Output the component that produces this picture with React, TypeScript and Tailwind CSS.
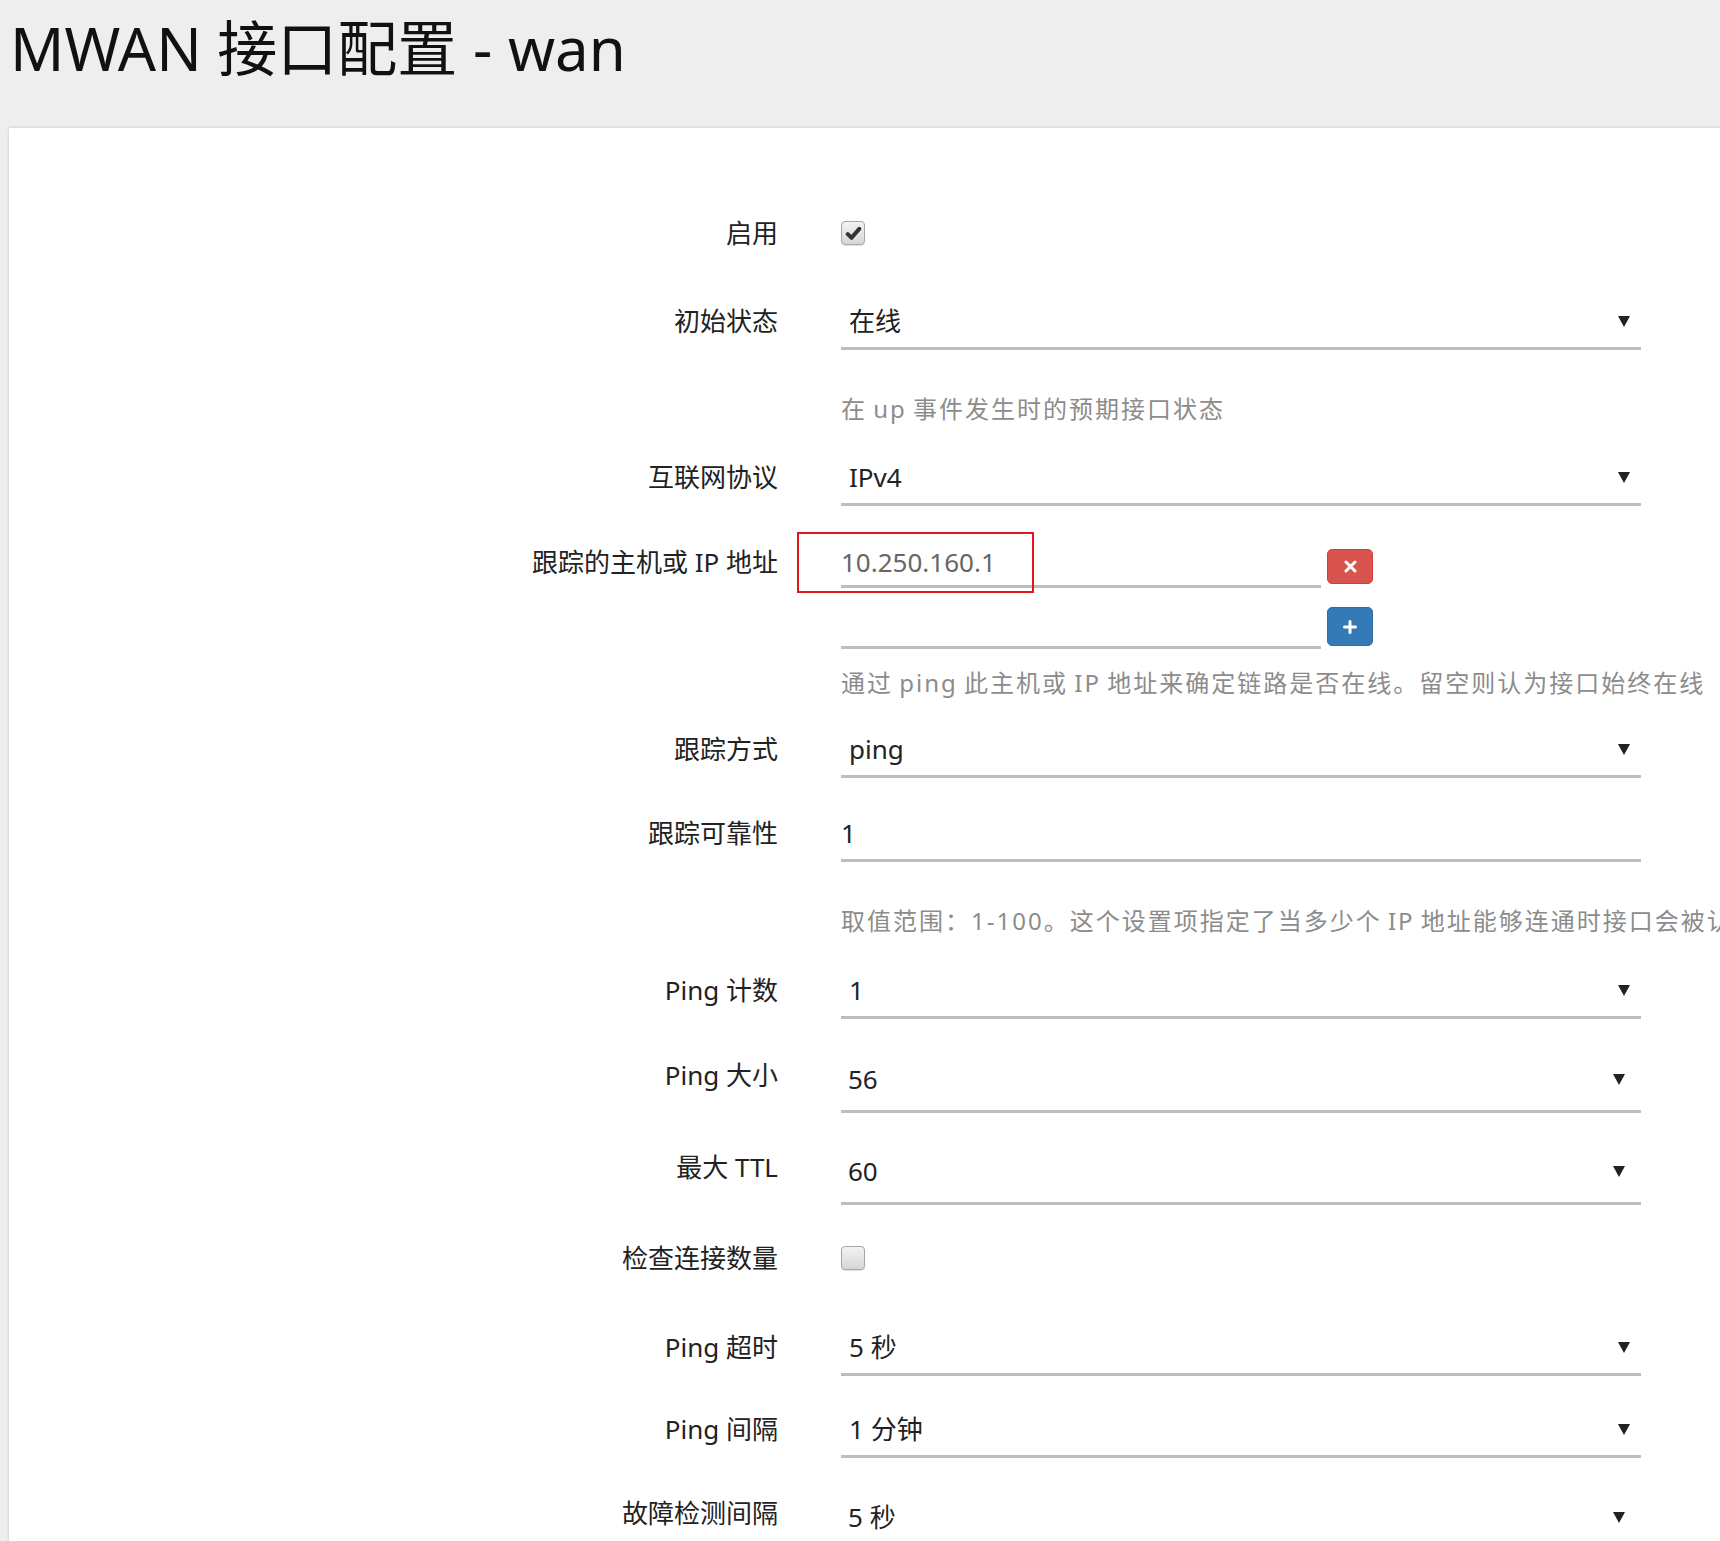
import React from 'react';

const font = "font-['Noto_Sans','Noto_Sans_CJK_SC',sans-serif]";

function Arrow() {
  return (
    <svg width="12" height="11" viewBox="0 0 12 11" className="shrink-0">
      <polygon points="0,0 12,0 6,11" fill="#222" />
    </svg>
  );
}

function CheckBox({ checked }: { checked?: boolean }) {
  return (
    <div className="w-[24px] h-[24px] rounded-[4px] border border-[#a6a6a6] bg-gradient-to-b from-[#f3f3f3] to-[#d6d6d6] shadow-[0_1px_1px_rgba(0,0,0,0.12)] flex items-center justify-center">
      {checked && (
        <svg width="17" height="17" viewBox="0 0 16 16">
          <path d="M2.6 8.6 L6.2 12 L13.4 3.6" fill="none" stroke="#333" strokeWidth="3.8" strokeLinecap="round" strokeLinejoin="round" />
        </svg>
      )}
    </div>
  );
}

function Label({ text, h }: { text: string; h: string }) {
  return (
    <div className={`w-[769px] shrink-0 flex items-center justify-end text-[26px] text-[#222] whitespace-nowrap ${h}`}>
      {text}
    </div>
  );
}

function Select({ value, combo }: { value: string; combo?: boolean }) {
  return (
    <div
      className={`w-[800px] border-b-[3px] border-[#bdbdbd] flex items-center justify-between text-[26px] text-[#222] ${
        combo ? 'h-[65px] pl-[7px] pr-[16px]' : 'h-[54px] pl-[8px] pr-[11px]'
      }`}
    >
      <span>{value}</span>
      <Arrow />
    </div>
  );
}

function SelectRow({ label, value, mt, combo }: { label: string; value: string; mt: string; combo?: boolean }) {
  return (
    <div className={`flex items-start ${mt}`}>
      <Label text={label} h={combo ? 'h-[54px]' : 'h-[51px]'} />
      <div className="ml-[63px]">
        <Select value={value} combo={combo} />
      </div>
    </div>
  );
}

function CheckRow({ label, checked, mt }: { label: string; checked?: boolean; mt: string }) {
  return (
    <div className={`flex items-start ${mt}`}>
      <Label text={label} h="h-[50px]" />
      <div className="ml-[63px] h-[50px] flex items-center">
        <CheckBox checked={checked} />
      </div>
    </div>
  );
}

function Help({ text, mt }: { text: string; mt: string }) {
  return (
    <div className={`ml-[832px] h-[30px] flex items-center whitespace-nowrap text-[24px] tracking-[2px] [word-spacing:-2px] text-[#8c8c8c] ${mt}`}>
      {text}
    </div>
  );
}

export default function App() {
  return (
    <div className={`min-h-screen w-full overflow-hidden bg-[#eeeeee] ${font}`}>
      <h1 className="pt-[18px] pl-[10px] text-[60px] leading-[60px] text-[#111] font-normal whitespace-nowrap mb-[50px]">
        MWAN 接口配置 - wan
      </h1>

      <div className="ml-[9px] bg-white shadow-[0_0_3px_rgba(0,0,0,0.18)] pt-[80px] pb-[40px]">
        <CheckRow label="启用" checked mt="mt-0" />

        <SelectRow label="初始状态" value="在线" mt="mt-[38px]" />
        <Help text="在 up 事件发生时的预期接口状态" mt="mt-[44px]" />

        <SelectRow label="互联网协议" value="IPv4" mt="mt-[28px]" />

        <div className="flex items-start mt-[33px]">
          <Label text="跟踪的主机或 IP 地址" h="h-[46px]" />
          <div className="ml-[63px] flex items-start relative">
            <div className="w-[480px] h-[49px] border-b-[3px] border-[#bdbdbd] flex items-center text-[26px] text-[#666]">
              10.250.160.1
            </div>
            <button className="ml-[6px] mt-[10px] w-[46px] h-[35px] rounded-[5px] bg-[#d9534f] border border-[#d43f3a] flex items-center justify-center">
              <svg width="13" height="13" viewBox="0 0 13 13">
                <path d="M2 2 L11 11 M11 2 L2 11" stroke="#fff" strokeWidth="3" strokeLinecap="round" />
              </svg>
            </button>
            <div className="absolute left-[-44px] top-[-7px] w-[237px] h-[61px] border-2 border-[#e3161e]" />
          </div>
        </div>

        <div className="flex items-start mt-[12px]">
          <div className="w-[769px] shrink-0" />
          <div className="ml-[63px] flex items-start">
            <div className="w-[480px] h-[49px] border-b-[3px] border-[#bdbdbd]" />
            <button className="ml-[6px] mt-[7px] w-[46px] h-[39px] rounded-[5px] bg-[#337ab7] border border-[#2e6da4] flex items-center justify-center">
              <svg width="14" height="14" viewBox="0 0 14 14">
                <path d="M7 1.5 V12.5 M1.5 7 H12.5" stroke="#fff" strokeWidth="3" strokeLinecap="round" />
              </svg>
            </button>
          </div>
        </div>
        <Help text="通过 ping 此主机或 IP 地址来确定链路是否在线。留空则认为接口始终在线" mt="mt-[19px]" />

        <SelectRow label="跟踪方式" value="ping" mt="mt-[26px]" />

        <div className="flex items-start mt-[29px]">
          <Label text="跟踪可靠性" h="h-[52px]" />
          <div className="ml-[63px] w-[800px] h-[55px] border-b-[3px] border-[#bdbdbd] flex items-center text-[26px] text-[#222]">
            1
          </div>
        </div>
        <Help
          text="取值范围：1-100。这个设置项指定了当多少个 IP 地址能够连通时接口会被认为在线"
          mt="mt-[44px]"
        />

        <SelectRow label="Ping 计数" value="1" mt="mt-[29px]" />
        <SelectRow label="Ping 大小" value="56" mt="mt-[29px]" combo />
        <SelectRow label="最大 TTL" value="60" mt="mt-[27px]" combo />

        <CheckRow label="检查连接数量" mt="mt-[28px]" />

        <SelectRow label="Ping 超时" value="5 秒" mt="mt-[39px]" />
        <SelectRow label="Ping 间隔" value="1 分钟" mt="mt-[28px]" />
        <SelectRow label="故障检测间隔" value="5 秒" mt="mt-[28px]" combo />
      </div>
    </div>
  );
}
